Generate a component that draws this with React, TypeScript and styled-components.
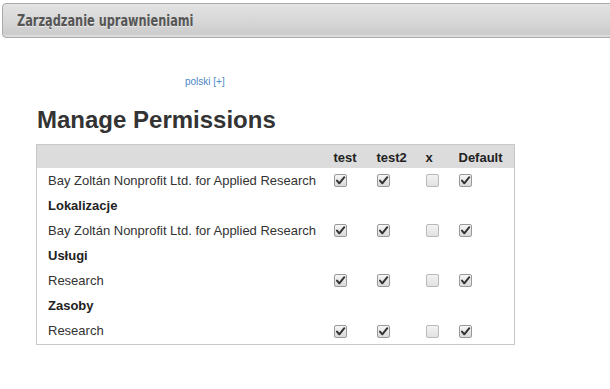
import styled, { createGlobalStyle } from "styled-components";

const GlobalStyle = createGlobalStyle`
    html, body {
        margin: 0;
        padding: 0;
        background: #fff;
        overflow: hidden;
    }
    body {
        font-family: "Liberation Sans", Arial, sans-serif;
        color: #333;
    }
`

const TitleBar = styled.div`
    display: flex;
    align-items: center;
    height: 33px;
    margin: 3px -6px 0 2px;
    padding: 0 0 0 14px;
    border: 1px solid #aaa;
    border-radius: 4px;
    background: linear-gradient(to bottom, #e3e3e3 0%, #d6d6d6 55%, #c9c9c9 100%);
    box-shadow: inset 0 -2px 0 rgba(255, 255, 255, 0.35);
`
const TitleText = styled.h1`
    margin: 0;
    font-family: "Liberation Sans Narrow", "DejaVu Sans Condensed", "Liberation Sans", sans-serif;
    font-weight: bold;
    font-size: 15px;
    color: #555;
    transform: scaleX(0.84);
    transform-origin: left center;
    white-space: nowrap;
    text-shadow: 0 1px 0 rgba(255, 255, 255, 0.5);
`
const Content = styled.div`
    display: flex;
    flex-direction: column;
    padding: 0 0 0 36px;
`
const LangLink = styled.a`
    align-self: flex-start;
    margin: 38px 0 0 149px;
    font-size: 10px;
    line-height: 12px;
    color: #4a86c5;
    text-decoration: none;
`
const Heading = styled.h2`
    margin: 18px 0 0 1px;
    font-size: 24px;
    line-height: 28px;
    font-weight: bold;
    color: #333;
`
const Table = styled.table`
    margin: 10px 0 0 0;
    width: 478px;
    table-layout: fixed;
    border-collapse: collapse;
    border: 1px solid #c8c8c8;
    font-size: 13px;
`
const HeadRow = styled.tr`
    background: #dcdcdc;
    height: 23px;
`
const Th = styled.th<{ $w: number }>`
    box-sizing: border-box;
    width: ${props => props.$w}px;
    padding: 2px 0 0 7px;
    text-align: left;
    font-weight: bold;
    font-size: 13px;
    color: #222;
    white-space: nowrap;
`
const Row = styled.tr<{ $last?: boolean }>`
    height: ${props => props.$last ? 27 : 25}px;
    vertical-align: ${props => props.$last ? "top" : "middle"};
`
const NameCell = styled.td<{ $group?: boolean }>`
    padding: 0 0 0 11px;
    font-weight: ${props => props.$group ? "bold" : "normal"};
    color: ${props => props.$group ? "#222" : "#333"};
    white-space: nowrap;
`
const LastCell = styled.td`
    padding: 5px 0 0 0;
`
const BoxCell = styled.td<{ $top?: boolean }>`
    padding: ${props => props.$top ? "7px" : "0"} 0 0 7px;
`
const Box = styled.span<{ $on: boolean }>`
    display: block;
    width: 11px;
    height: 11px;
    border: 1px solid ${props => props.$on ? "#999" : "#b9b9b9"};
    border-radius: 2px;
    background: ${props => props.$on
        ? "linear-gradient(to bottom, #f6f6f6, #d9d9d9)"
        : "linear-gradient(to bottom, #f2f2f2, #e2e2e2)"};
    svg {
        display: block;
    }
`

function Check({ on }: { on: boolean }) {
    return (
        <Box $on={on}>
            {on && (
                <svg width="11" height="11" viewBox="0 0 11 11">
                    <path d="M2 5.6 L4.3 8.3 L9.3 2.2" fill="none" stroke="#333" strokeWidth="2" strokeLinecap="round" strokeLinejoin="round" />
                </svg>
            )}
        </Box>
    )
}

const columns = [
    { label: "test", w: 43 },
    { label: "test2", w: 49 },
    { label: "x", w: 33 },
    { label: "Default", w: 63 },
]

const rows: { name: string; group?: boolean }[] = [
    { name: "Bay Zoltán Nonprofit Ltd. for Applied Research" },
    { name: "Lokalizacje", group: true },
    { name: "Bay Zoltán Nonprofit Ltd. for Applied Research" },
    { name: "Usługi", group: true },
    { name: "Research" },
    { name: "Zasoby", group: true },
    { name: "Research" },
]

const values = [true, true, false, true]

export default function App() {
    return (
        <>
            <GlobalStyle />
            <TitleBar>
                <TitleText>Zarządzanie uprawnieniami</TitleText>
            </TitleBar>
            <Content>
                <LangLink href="#">polski [+]</LangLink>
                <Heading>Manage Permissions</Heading>
                <Table>
                    <thead>
                        <HeadRow>
                            <Th $w={290}></Th>
                            {columns.map(c => (
                                <Th key={c.label} $w={c.w}>{c.label}</Th>
                            ))}
                        </HeadRow>
                    </thead>
                    <tbody>
                        {rows.map((r, i) => {
                            const last = i === rows.length - 1
                            return (
                                <Row key={i} $last={last}>
                                    {last
                                        ? <LastCell><NameCell as="div" $group={r.group}>{r.name}</NameCell></LastCell>
                                        : <NameCell $group={r.group}>{r.name}</NameCell>}
                                    {columns.map((c, j) => (
                                        <BoxCell key={c.label} $top={last}>
                                            {!r.group && <Check on={values[j]} />}
                                        </BoxCell>
                                    ))}
                                </Row>
                            )
                        })}
                    </tbody>
                </Table>
            </Content>
        </>
    )
}
